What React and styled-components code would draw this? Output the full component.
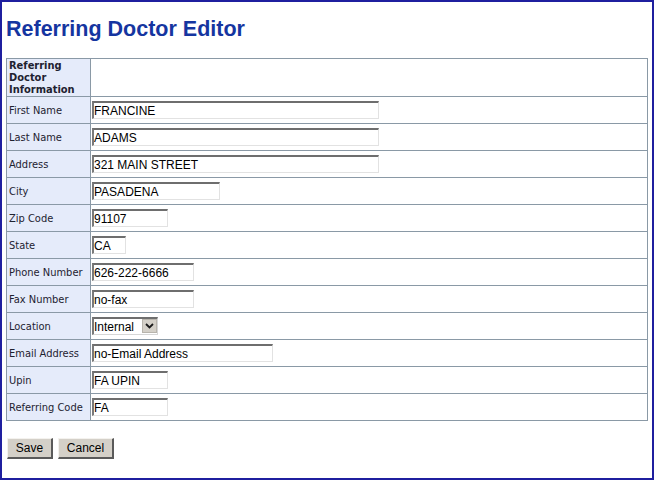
import React from 'react';
import styled, { createGlobalStyle } from 'styled-components';

const Global = createGlobalStyle`
  html, body { margin: 0; padding: 0; background: #fff; }
  body { font-family: "Liberation Sans", Arial, sans-serif; }
`;

const Frame = styled.div`
  box-sizing: border-box;
  width: 654px;
  height: 480px;
  border: 2px solid #1f1f9f;
  padding: 15px 4px 0 4px;
  background: #fff;
`;

const Title = styled.h1`
  margin: 0 0 16px;
  font: bold 21.5px/25px "Liberation Sans", Arial, sans-serif;
  color: #1535a0;
`;

const FormTable = styled.table`
  width: 100%;
  border-collapse: collapse;
  border: 1px solid #8a99a6;
`;

const Row = styled.tr`
  height: ${(p) => p.$h}px;
`;

const LabelCell = styled.td`
  width: 79px;
  padding: ${(p) => (p.$bold ? '1px 2px 0' : '2px 2px 0')};
  border: 1px solid #8a99a6;
  background: #e5ebfa;
  font-family: "DejaVu Sans Condensed", "DejaVu Sans", sans-serif;
  font-size: 11px;
  font-weight: ${(p) => (p.$bold ? 'bold' : 'normal')};
  line-height: 12px;
  color: #1e2230;
  vertical-align: middle;
  text-align: left;
`;

const ValueCell = styled.td`
  padding: 0 1px;
  border: 1px solid #8a99a6;
  vertical-align: middle;
`;

const TextInput = styled.input`
  box-sizing: border-box;
  display: block;
  width: ${(p) => p.$w}px;
  height: 18px;
  margin: 0;
  padding: 0;
  border-style: solid;
  border-width: 2px 1px 1px 2px;
  border-color: #6e6e6e #e2e2e2 #e2e2e2 #7a7a7a;
  background: #fff;
  font: 12px "Liberation Sans", Arial, sans-serif;
  color: #000;
  outline: none;
`;

const SelectWrap = styled.div`
  position: relative;
  display: inline-block;
  vertical-align: middle;
`;

const Select = styled.select`
  box-sizing: border-box;
  display: block;
  width: 66px;
  height: 18px;
  margin: 0;
  padding: 0 18px 0 0;
  appearance: none;
  -webkit-appearance: none;
  border-style: solid;
  border-width: 2px 1px 1px 2px;
  border-color: #6e6e6e #d6d6d6 #d6d6d6 #7a7a7a;
  border-radius: 0;
  background: #fff;
  font: 12px "Liberation Sans", Arial, sans-serif;
  color: #000;
`;

const Arrow = styled.span`
  position: absolute;
  top: 2px;
  right: 1px;
  width: 15px;
  height: 14px;
  box-sizing: border-box;
  background: #d4d0c8;
  border: 1px solid #b8b4ac;
  display: flex;
  align-items: center;
  justify-content: center;
  pointer-events: none;
`;

const Buttons = styled.div`
  display: flex;
  gap: 5px;
  margin: 17px 0 0 1px;
`;

const Button = styled.button`
  box-sizing: border-box;
  height: 21px;
  min-width: ${(p) => p.$w}px;
  padding: 0 6px;
  background: #d4d0c8;
  border-style: solid;
  border-width: 1px 2px 2px 1px;
  border-color: #f4f2ee #5a5a5a #5a5a5a #f4f2ee;
  font: 12px "Liberation Sans", Arial, sans-serif;
  color: #000;
`;

const fields = [
  { label: 'First Name', value: 'FRANCINE', w: 287 },
  { label: 'Last Name', value: 'ADAMS', w: 287 },
  { label: 'Address', value: '321 MAIN STREET', w: 287 },
  { label: 'City', value: 'PASADENA', w: 128 },
  { label: 'Zip Code', value: '91107', w: 76 },
  { label: 'State', value: 'CA', w: 34 },
  { label: 'Phone Number', value: '626-222-6666', w: 102 },
  { label: 'Fax Number', value: 'no-fax', w: 102 },
  { label: 'Location', select: true },
  { label: 'Email Address', value: 'no-Email Address', w: 181 },
  { label: 'Upin', value: 'FA UPIN', w: 76 },
  { label: 'Referring Code', value: 'FA', w: 76 },
];

export default function App() {
  return (
    <>
      <Global />
      <Frame>
        <Title>Referring Doctor Editor</Title>
        <FormTable>
          <tbody>
            <Row $h={38}>
              <LabelCell $bold>Referring Doctor Information</LabelCell>
              <ValueCell />
            </Row>
            {fields.map((f) => (
              <Row $h={27} key={f.label}>
                <LabelCell>{f.label}</LabelCell>
                <ValueCell>
                  {f.select ? (
                    <SelectWrap>
                      <Select defaultValue="Internal">
                        <option>Internal</option>
                        <option>External</option>
                      </Select>
                      <Arrow>
                        <svg width="9" height="6" viewBox="0 0 9 6">
                          <path d="M1 1 L4.5 4.5 L8 1" fill="none" stroke="#1a1a1a" strokeWidth="1.8" />
                        </svg>
                      </Arrow>
                    </SelectWrap>
                  ) : (
                    <TextInput $w={f.w} defaultValue={f.value} />
                  )}
                </ValueCell>
              </Row>
            ))}
          </tbody>
        </FormTable>
        <Buttons>
          <Button $w={46}>Save</Button>
          <Button $w={56}>Cancel</Button>
        </Buttons>
      </Frame>
    </>
  );
}
